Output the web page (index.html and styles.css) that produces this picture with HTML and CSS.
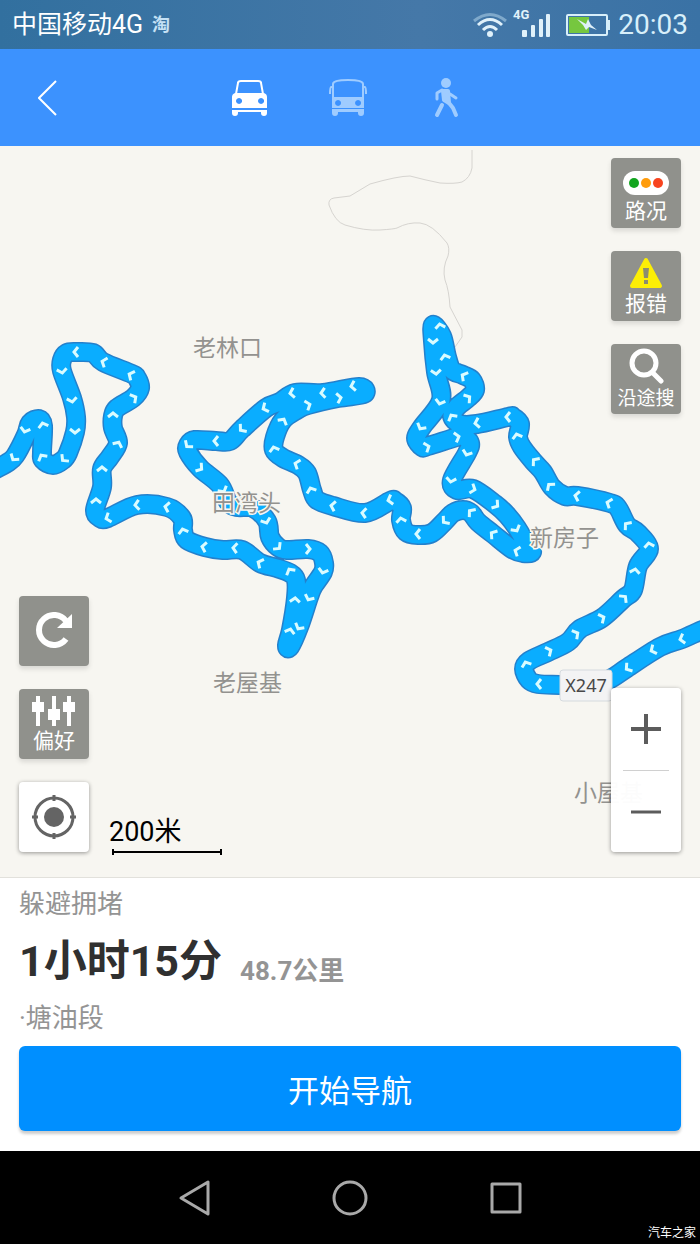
FILE: index.html
```html
<!DOCTYPE html>
<html lang="zh-CN">
<head>
	<meta charset="UTF-8">
	<meta name="viewport" content="width=device-width, initial-scale=1.0">
	<title>路线导航</title>
	<link rel="stylesheet" href="styles.css">
	<script>
		// turns the route's straight segments into a curve through the same points
		function smoothRoute(){
			let route=document.querySelector('#route');
			let n=route.getAttribute('d').match(/-?\d+/g).map(Number);
			let p=[];
			for(let i=0;i<n.length;i+=2) p.push([n[i],n[i+1]]);
			let d='M'+p[0];
			for(let i=0;i<p.length-1;i++){
				let a=p[i-1]||p[i], b=p[i], c=p[i+1], e=p[i+2]||c;
				d+='C'+[b[0]+(c[0]-a[0])/6, b[1]+(c[1]-a[1])/6, c[0]-(e[0]-b[0])/6, c[1]-(e[1]-b[1])/6, c[0], c[1]];
			}
			route.setAttribute('d',d);
		}
		document.addEventListener('DOMContentLoaded', smoothRoute);
	</script>
</head>
<body>
	<div class="status">
		<span class="status__carrier">中国移动4G</span>
		<span class="status__app">淘</span>
		<div class="status__icons">
			<svg width="34" height="26" viewBox="0 0 34 26" fill="none" stroke="#e0f1fa" stroke-width="3">
				<path d="M1 9Q17-4 33 9" stroke="#7fa9cb"/>
				<path d="M5 13Q17 2 29 13"/>
				<path d="M10 18Q17 11 24 18"/>
				<circle cx="17" cy="22" r="3" fill="#e0f1fa" stroke="none"/>
			</svg>
			<svg class="status__signal" width="38" height="30" viewBox="0 0 38 30" fill="#e0f1fa">
				<text x="0" y="9" class="status__net">4G</text>
				<rect x="9" y="20" width="5" height="7" rx="1"/>
				<rect x="18" y="15" width="4" height="12" rx="1"/>
				<rect x="26" y="9" width="4" height="18" rx="1"/>
				<rect x="33" y="4" width="4" height="23" rx="1"/>
			</svg>
			<svg width="44" height="22" viewBox="0 0 44 22">
				<rect x="3" y="3" width="20" height="16" fill="#76c73f"/>
				<rect x="1" y="1" width="40" height="20" rx="1" fill="none" stroke="#d8effa" stroke-width="2"/>
				<rect x="41" y="6" width="3" height="10" fill="#d8effa"/>
				<path d="M11 5l9 5 2-5 3 6 6 5-8-3-3 3-3-5z" fill="#e0f1fa"/>
			</svg>
			<span class="status__time">20:03</span>
		</div>
	</div>

	<header class="header">
		<button class="header__back" aria-label="返回">
			<svg width="20" height="36" viewBox="0 0 20 36" fill="none" stroke="#fff" stroke-width="2"><path d="M18 1L1 18L18 35"/></svg>
		</button>
		<div class="header__tabs">
			<button class="header__tab active" aria-label="驾车">
				<svg width="38" height="38" viewBox="0 0 38 38" fill="#fff">
					<path d="M5 15L7 4Q7 2 10 2H27Q30 2 30 4L32 15" fill="none" stroke="#fff" stroke-width="2"/>
					<path fill-rule="evenodd" d="M4 14H33Q36 15 36 18V29H1V18Q1 15 4 14zM8 19a3 3 0 1 0 .1 0zM30 19a3 3 0 1 0 .1 0z"/>
					<path d="M1 31H36V34Q36 37 33 37T30 34V33H7V34Q7 37 4 37T1 34z"/>
				</svg>
			</button>
			<button class="header__tab" aria-label="公交">
				<svg width="40" height="40" viewBox="0 0 40 40" fill="#9fccff">
					<path d="M5 20V6Q5 2 20 2T35 6V20M5 9H3Q2 9 2 16M35 9H37Q38 9 38 16" fill="none" stroke="#9fccff" stroke-width="2"/>
					<path fill-rule="evenodd" d="M4 19H36V30H4zM10 22a3 3 0 1 0 .1 0zM30 22a3 3 0 1 0 .1 0z"/>
					<path d="M4 31H36V35Q36 38 33 38T30 35V34H10V35Q10 38 7 38T4 35z"/>
				</svg>
			</button>
			<button class="header__tab" aria-label="步行">
				<svg width="26" height="40" viewBox="0 0 26 40" fill="none" stroke="#9fccff" stroke-linecap="round" stroke-linejoin="round">
					<circle cx="13" cy="5" r="5" fill="#9fccff" stroke="none"/>
					<path d="M10 13L11 22L16 25L15 13z" fill="#9fccff" stroke-width="4"/>
					<path d="M9 12L4 15V21M17 16L23 20" stroke-width="3"/>
					<path d="M16 25L20 30L23 37M9 27L4 37" stroke-width="4"/>
				</svg>
			</button>
		</div>
	</header>

	<main class="map">
		<svg class="map__canvas" viewBox="0 146 700 731" preserveAspectRatio="xMidYMid slice">
			<defs>
				<path id="route" d="M710 627L700 631L682 639L660 647L627 668L612 678L595 686L560 685L538 684L529 680L524 669L529 661L548 652L568 642L580 629L602 618L623 599L633 590L638 566L649 549L638 533L627 525L618 508L610 503L577 496L565 496L552 487L543 472L533 461L522 447L518 437L520 424L513 417L508 417L477 424L460 424L452 416L457 407L468 398L475 390L472 380L463 375L452 370L447 357L442 336L433 325L433 341L436 372L441 400L422 427L416 438L422 447L428 446L457 437L463 436L470 443L467 453L452 480L457 490L473 489L495 504L507 515L517 528L527 545L532 552L523 553L512 549L493 534L478 522L471 513L463 510L453 513L445 521L432 533L418 535L406 532L401 520L402 508L395 501L390 501L365 513L333 506L317 500L312 490L307 473L298 465L283 458L274 450L275 437L283 420L297 410L308 405L338 398L364 394L359 387L323 393L295 393L280 402L266 408L242 429L230 441L216 441L195 440L188 445L188 452L200 468L220 485L228 502L237 507L253 508L267 521L270 537L278 547L287 550L308 549L320 553L324 563L323 572L313 587L309 597L299 627L290 647L287 645L291 630L296 598L296 580L290 573L277 568L260 563L242 550L223 550L205 547L187 540L183 530L182 518L167 507L137 505L108 518L100 518L95 510L102 487L102 469L110 457L118 443L113 428L113 416L117 408L133 398L140 388L137 378L132 374L103 362L93 353L76 352L67 353L62 360L62 371L72 398L76 417L75 432L68 453L63 460L53 465L43 460L42 452L43 426L39 419L30 423L26 435L15 456L7 463L-10 472"/>
				<path id="arrow" d="M2-5L-2 0L2 5"/>
			</defs>
			<path class="map__trail" d="M472 150V168Q470 178 462 182Q455 184 440 183Q425 180 410 176Q398 176 370 184L350 196L334 198Q328 199 329 205Q335 222 345 225Q365 231 380 230T397 228Q408 222 420 223T447 243Q450 248 448 256Q442 268 445 280Q449 290 450 307L462 330V337L455 347"/>
			<use href="#route" class="map__edge"/>
			<use href="#route" class="map__road"/>
			<g class="map__arrows">
				<use href="#arrow" transform="translate(682 639) rotate(-15)"/>
				<use href="#arrow" transform="translate(653 650) rotate(-25)"/>
				<use href="#arrow" transform="translate(628 668) rotate(-35)"/>
				<use href="#arrow" transform="translate(539 684)"/>
				<use href="#arrow" transform="translate(526 664) rotate(70)"/>
				<use href="#arrow" transform="translate(549 651) rotate(155)"/>
				<use href="#arrow" transform="translate(576 634) rotate(150)"/>
				<use href="#arrow" transform="translate(602 618) rotate(155)"/>
				<use href="#arrow" transform="translate(624 598) rotate(135)"/>
				<use href="#arrow" transform="translate(635 571) rotate(100)"/>
				<use href="#arrow" transform="translate(649 545) rotate(80)"/>
				<use href="#arrow" transform="translate(627 525) rotate(40)"/>
				<use href="#arrow" transform="translate(609 503) rotate(20)"/>
				<use href="#arrow" transform="translate(577 496) rotate(10)"/>
				<use href="#arrow" transform="translate(550 486) rotate(50)"/>
				<use href="#arrow" transform="translate(535 461) rotate(40)"/>
				<use href="#arrow" transform="translate(517 436) rotate(75)"/>
				<use href="#arrow" transform="translate(508 417)"/>
				<use href="#arrow" transform="translate(477 423) rotate(-10)"/>
				<use href="#arrow" transform="translate(452 417) rotate(60)"/>
				<use href="#arrow" transform="translate(468 398) rotate(145)"/>
				<use href="#arrow" transform="translate(464 376) rotate(30)"/>
				<use href="#arrow" transform="translate(445 357) rotate(75)"/>
				<use href="#arrow" transform="translate(440 326) rotate(80)"/>
				<use href="#arrow" transform="translate(433 341) rotate(-90)"/>
				<use href="#arrow" transform="translate(436 372) rotate(-95)"/>
				<use href="#arrow" transform="translate(440 402) rotate(-75)"/>
				<use href="#arrow" transform="translate(421 427) rotate(-60)"/>
				<use href="#arrow" transform="translate(427 447) rotate(160)"/>
				<use href="#arrow" transform="translate(457 437) rotate(165)"/>
				<use href="#arrow" transform="translate(467 453) rotate(-70)"/>
				<use href="#arrow" transform="translate(451 480) rotate(-80)"/>
				<use href="#arrow" transform="translate(473 489) rotate(200)"/>
				<use href="#arrow" transform="translate(496 505) rotate(215)"/>
				<use href="#arrow" transform="translate(516 529) rotate(240)"/>
				<use href="#arrow" transform="translate(517 551) rotate(20)"/>
				<use href="#arrow" transform="translate(493 534) rotate(35)"/>
				<use href="#arrow" transform="translate(471 512) rotate(40)"/>
				<use href="#arrow" transform="translate(445 521) rotate(-40)"/>
				<use href="#arrow" transform="translate(418 534)"/>
				<use href="#arrow" transform="translate(401 520) rotate(80)"/>
				<use href="#arrow" transform="translate(390 500) rotate(-15)"/>
				<use href="#arrow" transform="translate(364 513) rotate(5)"/>
				<use href="#arrow" transform="translate(333 506) rotate(10)"/>
				<use href="#arrow" transform="translate(311 490) rotate(70)"/>
				<use href="#arrow" transform="translate(297 464) rotate(20)"/>
				<use href="#arrow" transform="translate(274 449) rotate(75)"/>
				<use href="#arrow" transform="translate(283 421) rotate(120)"/>
				<use href="#arrow" transform="translate(308 405) rotate(160)"/>
				<use href="#arrow" transform="translate(339 398) rotate(170)"/>
				<use href="#arrow" transform="translate(353 386) rotate(-10)"/>
				<use href="#arrow" transform="translate(323 393) rotate(-5)"/>
				<use href="#arrow" transform="translate(292 393) rotate(-10)"/>
				<use href="#arrow" transform="translate(265 408) rotate(-25)"/>
				<use href="#arrow" transform="translate(242 429) rotate(-40)"/>
				<use href="#arrow" transform="translate(216 441)"/>
				<use href="#arrow" transform="translate(188 445) rotate(-50)"/>
				<use href="#arrow" transform="translate(200 468) rotate(215)"/>
				<use href="#arrow" transform="translate(223 490) rotate(240)"/>
				<use href="#arrow" transform="translate(266 521) rotate(-110)"/>
				<use href="#arrow" transform="translate(278 547) rotate(-135)"/>
				<use href="#arrow" transform="translate(308 549) rotate(180)"/>
				<use href="#arrow" transform="translate(323 571) rotate(-75)"/>
				<use href="#arrow" transform="translate(309 598) rotate(-65)"/>
				<use href="#arrow" transform="translate(299 627) rotate(-60)"/>
				<use href="#arrow" transform="translate(290 631) rotate(105)"/>
				<use href="#arrow" transform="translate(295 600) rotate(95)"/>
				<use href="#arrow" transform="translate(290 571) rotate(60)"/>
				<use href="#arrow" transform="translate(260 563) rotate(25)"/>
				<use href="#arrow" transform="translate(235 548) rotate(5)"/>
				<use href="#arrow" transform="translate(204 547) rotate(10)"/>
				<use href="#arrow" transform="translate(183 531) rotate(75)"/>
				<use href="#arrow" transform="translate(167 507) rotate(10)"/>
				<use href="#arrow" transform="translate(137 505) rotate(-5)"/>
				<use href="#arrow" transform="translate(108 518) rotate(-20)"/>
				<use href="#arrow" transform="translate(96 501) rotate(90)"/>
				<use href="#arrow" transform="translate(102 469) rotate(90)"/>
				<use href="#arrow" transform="translate(118 444) rotate(115)"/>
				<use href="#arrow" transform="translate(113 415) rotate(90)"/>
				<use href="#arrow" transform="translate(134 398) rotate(150)"/>
				<use href="#arrow" transform="translate(131 375) rotate(25)"/>
				<use href="#arrow" transform="translate(104 362) rotate(20)"/>
				<use href="#arrow" transform="translate(76 352)"/>
				<use href="#arrow" transform="translate(62 371) rotate(-100)"/>
				<use href="#arrow" transform="translate(72 400) rotate(-100)"/>
				<use href="#arrow" transform="translate(75 431) rotate(-90)"/>
				<use href="#arrow" transform="translate(64 459) rotate(-45)"/>
				<use href="#arrow" transform="translate(42 457) rotate(60)"/>
				<use href="#arrow" transform="translate(43 425) rotate(75)"/>
				<use href="#arrow" transform="translate(25 430) rotate(-75)"/>
				<use href="#arrow" transform="translate(14 458) rotate(-55)"/>
			</g>
			<g class="map__places">
				<text x="193" y="356">老林口</text>
				<text x="212" y="511">田湾头</text>
				<text x="530" y="546">新房子</text>
				<text x="213" y="691">老屋基</text>
				<text x="574" y="801">小屋基</text>
			</g>
			<rect x="560" y="670" width="52" height="31" rx="3" fill="#f3f3f4" stroke="#d5dade"/>
			<text x="586" y="692" class="map__sign">X247</text>
		</svg>

		<div class="tools tools--right">
			<button class="tool">
				<svg width="46" height="32" viewBox="0 0 46 32">
					<rect y="7" width="46" height="24" rx="12" fill="#fff"/>
					<circle cx="11" cy="19" r="5" fill="#12a51f"/>
					<circle cx="23" cy="19" r="5" fill="#ff9c0c"/>
					<circle cx="35" cy="19" r="5" fill="#f8441f"/>
				</svg>
				<span class="tool__name">路况</span>
			</button>
			<button class="tool">
				<svg width="34" height="32" viewBox="0 0 34 32">
					<path d="M17 3L31 29H3z" fill="#fcee06" stroke="#fcee06" stroke-width="4" stroke-linejoin="round"/>
					<path d="M14 11H20L19 21H15zM15 23H19V27H15z" fill="#8b8c70"/>
				</svg>
				<span class="tool__name">报错</span>
			</button>
			<button class="tool">
				<svg width="36" height="36" viewBox="0 0 36 36" fill="none" stroke="#fff" stroke-linecap="round">
					<circle cx="16" cy="15" r="12" stroke-width="5"/>
					<path d="M25 25L33 33" stroke-width="5"/>
				</svg>
				<span class="tool__name tool__name--small">沿途搜</span>
			</button>
		</div>

		<div class="tools tools--left">
			<button class="tool" aria-label="刷新">
				<svg width="38" height="38" viewBox="0 0 38 38">
					<path d="M31 27A15 15 0 1 1 31 9" fill="none" stroke="#fff" stroke-width="6"/>
					<path d="M37 2V16H22z" fill="#fff"/>
				</svg>
			</button>
			<button class="tool">
				<svg width="44" height="30" viewBox="0 0 44 30" fill="#fff">
					<path d="M4 0H8V6H12V16H8V30H4V16H0V6H4zM20 0H24V13H28V24H24V30H20V24H16V13H20zM35 0H39V6H43V16H39V30H35V16H31V6H35z"/>
				</svg>
				<span class="tool__name">偏好</span>
			</button>
			<button class="tool tool--white" aria-label="定位">
				<svg width="46" height="46" viewBox="0 0 46 46" fill="none" stroke="#646464">
					<circle cx="23" cy="23" r="19" stroke-width="3"/>
					<circle cx="23" cy="23" r="10" fill="#646464" stroke="none"/>
					<path d="M23 1V7M23 39V45M1 23H7M39 23H45" stroke-width="3"/>
				</svg>
			</button>
		</div>

		<div class="scale">
			<span class="scale__text">200米</span>
			<div class="scale__line"></div>
		</div>

		<div class="zoom">
			<button class="zoom__btn" aria-label="放大">
				<svg width="30" height="30" viewBox="0 0 30 30" stroke="#5c5c5c" stroke-width="4"><path d="M15 0V30M0 15H30"/></svg>
			</button>
			<button class="zoom__btn" aria-label="缩小">
				<svg width="30" height="30" viewBox="0 0 30 30" stroke="#5c5c5c" stroke-width="3"><path d="M0 15H30"/></svg>
			</button>
		</div>
	</main>

	<section class="panel">
		<p class="panel__mode">躲避拥堵</p>
		<div class="panel__trip">
			<h1 class="panel__time">1小时15分</h1>
			<span class="panel__distance">48.7公里</span>
		</div>
		<p class="panel__mode">·塘油段</p>
		<button class="panel__start">开始导航</button>
	</section>

	<nav class="nav">
		<button class="nav__btn" aria-label="返回">
			<svg width="36" height="40" viewBox="0 0 36 40"><path d="M32 4V36L5 20z"/></svg>
		</button>
		<button class="nav__btn" aria-label="主页">
			<svg width="36" height="40" viewBox="0 0 36 40"><circle cx="18" cy="20" r="16"/></svg>
		</button>
		<button class="nav__btn" aria-label="最近任务">
			<svg width="36" height="40" viewBox="0 0 36 40"><rect x="4" y="6" width="28" height="28"/></svg>
		</button>
		<span class="nav__mark">汽车之家</span>
	</nav>
</body>
</html>
```
FILE: styles.css
```css
*{
	margin: 0;
	padding: 0;
	box-sizing: border-box;
}
body{
	display: flex;
	flex-direction: column;
	min-height: 100vh;
	font-family: Roboto, "Noto Sans CJK SC", sans-serif;
	background-color: white;
}
button{
	border: none;
	background: none;
	font-family: inherit;
}
svg{
	display: block;
}

.status{
	display: flex;
	align-items: center;
	height: 49px;
	padding: 0 12px;
	background: linear-gradient(90deg, #32709f, #4578a8 60%, #3a72a5);
	color: white;
}
.status__carrier{
	font-size: 25px;
	line-height: 30px;
}
.status__app{
	margin-left: 9px;
	font-size: 18px;
	font-weight: bold;
	line-height: 24px;
	color: #c5e1f5;
}
.status__icons{
	display: flex;
	align-items: center;
	margin-left: auto;
}
.status__signal{
	margin: 0 15px 0 6px;
	overflow: visible;
}
.status__net{
	font-size: 13px;
	font-weight: bold;
}
.status__time{
	margin-left: 8px;
	font-size: 28px;
	color: #d8effa;
}

.header{
	display: flex;
	height: 97px;
	padding-right: 100px;
	background-color: #3c92fe;
}
.header__back{
	display: flex;
	align-items: center;
	justify-content: center;
	width: 96px;
}
.header__tabs{
	display: flex;
	flex-grow: 1;
	justify-content: center;
}
.header__tab{
	display: flex;
	align-items: center;
	justify-content: center;
	width: 98px;
}

.map{
	position: relative;
	flex-grow: 1;
	min-height: 600px;
	background-color: #f7f6f1;
	overflow: hidden;
}
.map__canvas{
	position: absolute;
	width: 100%;
	height: 100%;
}
.map__trail{
	fill: none;
	stroke: #d6d4d0;
}
.map__edge, .map__road{
	fill: none;
	stroke: #2480cc;
	stroke-width: 20;
	stroke-linejoin: round;
	stroke-linecap: round;
}
.map__road{
	stroke: #0aadff;
	stroke-width: 17;
}
.map__arrows{
	fill: none;
	stroke: #d9fbff;
	stroke-width: 3;
}
.map__places{
	font-size: 23px;
	fill: #93928f;
	stroke: #f7f6f1;
	stroke-width: 3;
	paint-order: stroke;
}
.map__sign{
	font-family: "Noto Sans", sans-serif;
	font-size: 18px;
	text-anchor: middle;
	fill: #484848;
}

.tools{
	position: absolute;
	display: flex;
	flex-direction: column;
	gap: 23px;
}
.tools--right{
	top: 12px;
	right: 19px;
}
.tools--left{
	left: 19px;
	bottom: 25px;
}
.tool{
	display: flex;
	flex-direction: column;
	align-items: center;
	justify-content: center;
	gap: 3px;
	width: 70px;
	height: 70px;
	border-radius: 4px;
	background-color: #90918c;
	box-shadow: 0 3px 5px rgba(0, 0, 0, 0.12);
	color: white;
}
.tool--white{
	background-color: white;
	box-shadow: 0 1px 4px rgba(0, 0, 0, 0.4);
}
.tool__name{
	font-size: 21px;
	line-height: 24px;
}
.tool__name--small{
	font-size: 19px;
}

.scale{
	position: absolute;
	left: 109px;
	bottom: 22px;
}
.scale__text{
	font-size: 27px;
	line-height: 34px;
}
.scale__line{
	width: 110px;
	height: 6px;
	margin-left: 3px;
	border: solid black;
	border-width: 0 2px;
	background: linear-gradient(black, black) center / 100% 2px no-repeat;
}

.zoom{
	position: absolute;
	right: 19px;
	bottom: 25px;
	width: 70px;
	border-radius: 4px;
	background-color: rgba(255, 255, 255, 0.97);
	box-shadow: 0 1px 4px rgba(0, 0, 0, 0.4);
}
.zoom__btn{
	display: flex;
	align-items: center;
	justify-content: center;
	width: 46px;
	height: 82px;
	margin: 0 auto;
}
.zoom__btn + .zoom__btn{
	border-top: 1px solid #d0d0d0;
}

.panel{
	padding: 0 19px 20px;
	border-top: 1px solid #e2e1dc;
}
.panel__mode{
	font-size: 26px;
	line-height: 52px;
	color: #949494;
}
.panel__trip{
	display: flex;
	align-items: flex-end;
	gap: 18px;
}
.panel__time{
	font-size: 43px;
	line-height: 62px;
	color: #303030;
}
.panel__distance{
	font-size: 26px;
	font-weight: bold;
	line-height: 42px;
	color: #949494;
}
.panel__start{
	display: block;
	width: 100%;
	height: 85px;
	margin-top: 2px;
	border-radius: 6px;
	background-color: #008fff;
	box-shadow: 0 3px 3px rgba(0, 0, 0, 0.2);
	font-size: 31px;
	color: white;
}

.nav{
	position: relative;
	display: flex;
	justify-content: center;
	height: 93px;
	background-color: black;
}
.nav__btn{
	display: flex;
	align-items: center;
	justify-content: center;
	width: 156px;
	fill: none;
	stroke: #a9a9a9;
	stroke-width: 3;
	stroke-linejoin: round;
}
.nav__mark{
	position: absolute;
	right: 4px;
	bottom: 3px;
	font-size: 12px;
	line-height: 16px;
	color: white;
}
```
